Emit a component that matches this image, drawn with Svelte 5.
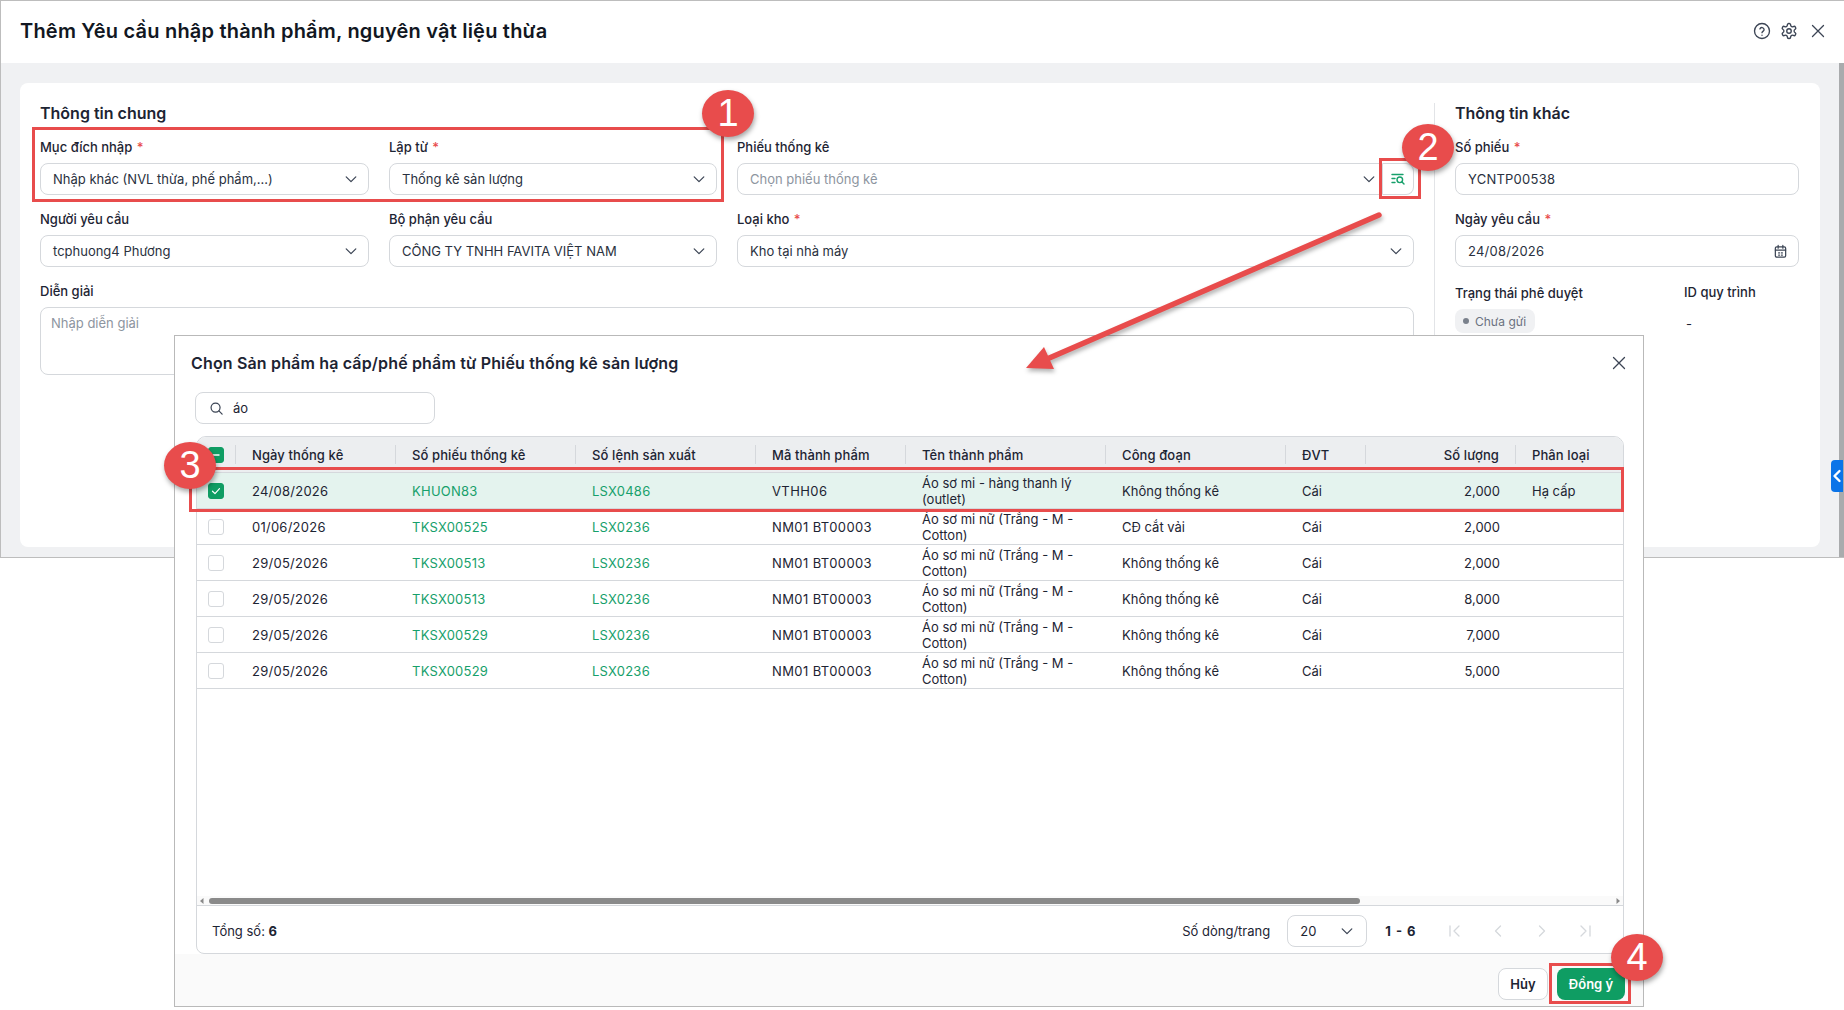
<script>
  const columns = [
    { label: 'Ngày thống kê' },
    { label: 'Số phiếu thống kê' },
    { label: 'Số lệnh sản xuất' },
    { label: 'Mã thành phẩm' },
    { label: 'Tên thành phẩm' },
    { label: 'Công đoạn' },
    { label: 'ĐVT' },
    { label: 'Số lượng', right: true },
    { label: 'Phân loại' }
  ];
  const shirt = 'Áo sơ mi nữ (Trắng - M - Cotton)';
  const rows = [
    { sel: true, d: '24/08/2026', p: 'KHUON83', l: 'LSX0486', m: 'VTHH06', t: 'Áo sơ mi - hàng thanh lý (outlet)', c: 'Không thống kê', q: '2,000', k: 'Hạ cấp' },
    { d: '01/06/2026', p: 'TKSX00525', l: 'LSX0236', m: 'NM01 BT00003', t: shirt, c: 'CĐ cắt vải', q: '2,000', k: '' },
    { d: '29/05/2026', p: 'TKSX00513', l: 'LSX0236', m: 'NM01 BT00003', t: shirt, c: 'Không thống kê', q: '2,000', k: '' },
    { d: '29/05/2026', p: 'TKSX00513', l: 'LSX0236', m: 'NM01 BT00003', t: shirt, c: 'Không thống kê', q: '8,000', k: '' },
    { d: '29/05/2026', p: 'TKSX00529', l: 'LSX0236', m: 'NM01 BT00003', t: shirt, c: 'Không thống kê', q: '7,000', k: '' },
    { d: '29/05/2026', p: 'TKSX00529', l: 'LSX0236', m: 'NM01 BT00003', t: shirt, c: 'Không thống kê', q: '5,000', k: '' }
  ];
</script>

{#snippet chevron()}
  <svg class="chev" viewBox="0 0 16 16" fill="none" stroke="#3b4454" stroke-width="1.4" stroke-linecap="round" stroke-linejoin="round"><path d="M2.5 5.500 8 11l5.500-5.500"/></svg>
{/snippet}
{#snippet closeX(size)}
  <svg width={size} height={size} viewBox="0 0 16 16" fill="none" stroke="#3b4454" stroke-width="1.3" stroke-linecap="round"><path d="M2.500 2.500l11 11M13.500 2.500l-11 11"/></svg>
{/snippet}

<div class="screen">
  <div class="window">
    <header class="top">
      <h1>Thêm Yêu cầu nhập thành phẩm, nguyên vật liệu thừa</h1>
      <div class="top-icons">
        <svg width="18" height="18" viewBox="0 0 24 24" fill="none" stroke="#3b4454" stroke-width="1.8" stroke-linecap="round"><circle cx="12" cy="12" r="10"/><path d="M9.2 9.2a2.9 2.9 0 0 1 5.6 1c0 1.900-2.800 2.600-2.800 4"/><path d="M12 17.600h.01"/></svg>
        <svg width="18" height="18" viewBox="0 0 24 24" fill="none" stroke="#3b4454" stroke-width="1.8"><path d="M12.22 2h-.44a2 2 0 0 0-2 2v.18a2 2 0 0 1-1 1.73l-.43.25a2 2 0 0 1-2 0l-.15-.08a2 2 0 0 0-2.73.73l-.22.38a2 2 0 0 0 .73 2.73l.15.1a2 2 0 0 1 1 1.72v.51a2 2 0 0 1-1 1.74l-.15.09a2 2 0 0 0-.73 2.73l.22.38a2 2 0 0 0 2.73.73l.15-.08a2 2 0 0 1 2 0l.43.25a2 2 0 0 1 1 1.73V20a2 2 0 0 0 2 2h.44a2 2 0 0 0 2-2v-.18a2 2 0 0 1 1-1.73l.43-.25a2 2 0 0 1 2 0l.15.08a2 2 0 0 0 2.73-.73l.22-.39a2 2 0 0 0-.73-2.73l-.15-.08a2 2 0 0 1-1-1.74v-.5a2 2 0 0 1 1-1.74l.15-.09a2 2 0 0 0 .73-2.73l-.22-.38a2 2 0 0 0-2.73-.73l-.15.08a2 2 0 0 1-2 0l-.43-.25a2 2 0 0 1-1-1.73V4a2 2 0 0 0-2-2z"/><circle cx="12" cy="12" r="3"/></svg>
        {@render closeX(16)}
      </div>
    </header>
    <main class="body">
      <section class="card">
        <div class="general">
          <h2>Thông tin chung</h2>
          <div class="grid">
            <div class="group"><span class="lbl">Mục đích nhập <i>*</i></span><div class="field"><span>Nhập khác (NVL thừa, phế phẩm,...)</span>{@render chevron()}</div></div>
            <div class="group"><span class="lbl">Lập từ <i>*</i></span><div class="field"><span>Thống kê sản lượng</span>{@render chevron()}</div></div>
            <div class="group"><span class="lbl">Phiếu thống kê</span>
              <div class="joined">
                <div class="field left"><span class="ph">Chọn phiếu thống kê</span>{@render chevron()}</div>
                <div class="lookup">
                  <svg width="16" height="16" viewBox="0 0 16 16" fill="none" stroke="#17a06b" stroke-width="1.4" stroke-linecap="round"><path d="M2 3.500h11M2 7.500h3M2 11.500h3"/><circle cx="9.800" cy="8.800" r="2.800"/><path d="M12 11l2 2"/></svg>
                </div>
              </div>
            </div>
            <div class="group"><span class="lbl">Người yêu cầu</span><div class="field"><span>tcphuong4 Phương</span>{@render chevron()}</div></div>
            <div class="group"><span class="lbl">Bộ phận yêu cầu</span><div class="field"><span>CÔNG TY TNHH FAVITA VIỆT NAM</span>{@render chevron()}</div></div>
            <div class="group"><span class="lbl">Loại kho <i>*</i></span><div class="field"><span>Kho tại nhà máy</span>{@render chevron()}</div></div>
            <div class="group wide"><span class="lbl">Diễn giải</span><div class="area">Nhập diễn giải</div></div>
          </div>
        </div>
        <aside class="other">
          <h2>Thông tin khác</h2>
          <div class="group"><span class="lbl">Số phiếu <i>*</i></span><div class="field"><span class="code">YCNTP00538</span></div></div>
          <div class="group"><span class="lbl">Ngày yêu cầu <i>*</i></span>
            <div class="field"><span class="code">24/08/2026</span>
              <svg width="15" height="15" viewBox="0 0 16 16" fill="none" stroke="#3b4454" stroke-width="1.3" stroke-linecap="round"><rect x="2.500" y="3" width="11" height="11" rx="1.500"/><path d="M5.500 1.500v3M10.500 1.500v3M2.500 6.500h11M6 9.500h1M9 9.500h1M6 11.800h1M9 11.800h1"/></svg>
            </div>
          </div>
          <div class="status">
            <div class="st-col"><span class="lbl st-l">Trạng thái phê duyệt</span><span class="chip"><b></b>Chưa gửi</span></div>
            <div class="id-col"><span class="lbl">ID quy trình</span><span class="dash">-</span></div>
          </div>
        </aside>
      </section>
    </main>
    <div class="scroll"></div>
    <div class="tab"><svg width="10" height="14" viewBox="0 0 10 14" fill="none" stroke="#fff" stroke-width="2.400" stroke-linecap="round" stroke-linejoin="round"><path d="M7.500 2 2.500 7l5 5"/></svg></div>
  </div>

  <div class="dialog">
    <div class="d-head">
      <h3>Chọn Sản phẩm hạ cấp/phế phẩm từ Phiếu thống kê sản lượng</h3>
      {@render closeX(16)}
    </div>
    <div class="search">
      <svg width="15" height="15" viewBox="0 0 16 16" fill="none" stroke="#3b4454" stroke-width="1.3" stroke-linecap="round"><circle cx="7" cy="7" r="4.800"/><path d="M10.600 10.600 14 14"/></svg>
      <span>áo</span>
    </div>
    <div class="table">
      <div class="tr th">
        <div class="cell chk"><span class="box on"><svg width="10" height="10" viewBox="0 0 10 10" stroke="#fff" stroke-width="1.400" stroke-linecap="round"><path d="M2 5h6"/></svg></span></div>
        {#each columns as c}
          <div class="cell sep" class:num={c.right}>{c.label}</div>
        {/each}
      </div>
      {#each rows as r}
        <div class="tr" class:selected={r.sel}>
          <div class="cell chk">
            {#if r.sel}
              <span class="box on"><svg width="12" height="12" viewBox="0 0 12 12" fill="none" stroke="#fff" stroke-width="1.200" stroke-linecap="round" stroke-linejoin="round"><path d="M2.500 6.200 5 8.600l4.500-5"/></svg></span>
            {:else}
              <span class="box"></span>
            {/if}
          </div>
          <div class="cell code">{r.d}</div>
          <div class="cell link code">{r.p}</div>
          <div class="cell link code">{r.l}</div>
          <div class="cell mat">{r.m}</div>
          <div class="cell two">{r.t}</div>
          <div class="cell">{r.c}</div>
          <div class="cell">Cái</div>
          <div class="cell num">{r.q}</div>
          <div class="cell">{r.k}</div>
        </div>
      {/each}
      <div class="spacer"></div>
      <div class="hbar">
        <svg class="arr" viewBox="0 0 6 8" fill="#8a8a8a"><path d="M4.500 1v6L1 4z"/></svg>
        <div class="thumb"></div>
        <svg class="arr" viewBox="0 0 6 8" fill="#8a8a8a"><path d="M1.500 1v6L5 4z"/></svg>
      </div>
      <div class="pager">
        <span class="total">Tổng số: <b>6</b></span>
        <span class="per">Số dòng/trang</span>
        <div class="size"><span>20</span>{@render chevron()}</div>
        <b class="range">1 - 6</b>
        <div class="nav">
          <svg viewBox="0 0 16 16"><path d="M3 3v10M12 3 7 8l5 5"/></svg>
          <svg viewBox="0 0 16 16"><path d="M10.500 3 5.500 8l5 5"/></svg>
          <svg viewBox="0 0 16 16"><path d="M5.500 3l5 5-5 5"/></svg>
          <svg viewBox="0 0 16 16"><path d="M13 3v10M4 3l5 5-5 5"/></svg>
        </div>
      </div>
    </div>
    <div class="d-foot">
      <button class="ghost">Hủy</button>
      <button class="primary">Đồng ý</button>
    </div>
  </div>

  <div class="mark m1"></div>
  <div class="mark m2"></div>
  <div class="mark m3"></div>
  <div class="mark m4"></div>
  <svg class="arrow" width="400" height="190" viewBox="0 0 400 190">
    <path d="M376 5 44 149" fill="none" stroke="#e84c4c" stroke-width="5.500" stroke-linecap="round"/>
    <path d="M23 158 41 137 51 159z" fill="#e84c4c"/>
  </svg>
  <div class="badge b1">1</div>
  <div class="badge b2">2</div>
  <div class="badge b3">3</div>
  <div class="badge b4">4</div>
</div>

<style>
  :global(body) { margin: 0; background: #fff; overflow: hidden; }
  .screen { position: relative; width: 1844px; height: 1010px; background: #fff; overflow: hidden; font-family: Inter, "Noto Sans", sans-serif; font-size: 13px; color: #1d2433; }
  h1, h2, h3 { margin: 0; }

  .window { position: relative; height: 558px; box-sizing: border-box; border: 1px solid #bdbdbd; border-width: 1px 0 1px 1px; display: flex; flex-direction: column; overflow: hidden; }
  .top { height: 62px; box-sizing: border-box; padding: 0 18px 2px 19px; flex: none; display: flex; align-items: center; justify-content: space-between; background: #fff; }
  h1 { font-size: 20px; font-weight: 600; letter-spacing: .2px; color: #111722; }
  .top-icons { display: flex; align-items: center; gap: 9px; }
  .top-icons svg:last-child { margin-left: 3px; }
  .body { flex: 1; background: #f0f1f3; padding: 20px 24px 10px 19px; display: flex; }
  .card { flex: 1; background: #fff; border-radius: 8px; display: flex; padding: 20px 21px 0 20px; }
  h2 { font-size: 16px; font-weight: 600; line-height: 20px; margin-bottom: 16px; color: #1d2433; }
  .general { width: 1374px; flex: none; }
  .grid { display: grid; grid-template-columns: 329px 328px 677px; column-gap: 20px; row-gap: 16px; }
  .wide { grid-column: 1 / -1; }
  .group { display: flex; flex-direction: column; gap: 8px; }
  .lbl { font-weight: 500; font-size: 13px; line-height: 16px; color: #1d2433; }
  .lbl i { color: #e84c4c; font-style: normal; margin-left: 1px; }
  .field { height: 32px; box-sizing: border-box; border: 1px solid #d5d8dc; border-radius: 8px; display: flex; align-items: center; justify-content: space-between; padding: 0 10px 0 12px; background: #fff; color: #2a3140; }
  .chev { width: 14px; height: 14px; flex: none; }
  .ph { color: #8d95a0; }
  .joined { display: flex; }
  .left { flex: 1; border-radius: 8px 0 0 8px; padding-right: 6px; }
  .lookup { width: 31px; height: 32px; box-sizing: border-box; border: 1px solid #d5d8dc; border-left: 0; border-radius: 0 8px 8px 0; display: flex; align-items: center; justify-content: center; }
  .area { height: 68px; box-sizing: border-box; border: 1px solid #d5d8dc; border-radius: 8px; padding: 7px 10px; color: #8d95a0; line-height: 16px; }
  .other { flex: 1; border-left: 1px solid #e2e4e7; margin-left: 20px; padding-left: 20px; display: flex; flex-direction: column; }
  .other .group { margin-bottom: 16px; }
  .code { letter-spacing: .25px; }
  .mat { letter-spacing: .4px; }
  .status { display: flex; margin-top: 1px; }
  .st-col { width: 229px; display: flex; flex-direction: column; align-items: flex-start; }
  .st-l { margin-top: 1px; }
  .id-col { display: flex; flex-direction: column; }
  .chip { margin-top: 8px; height: 24px; width: 80px; box-sizing: border-box; border-radius: 8px; background: #f0f1f3; color: #6b7280; font-size: 12px; display: flex; align-items: center; gap: 6px; padding-left: 8px; }
  .chip b { width: 6px; height: 6px; border-radius: 50%; background: #7a818c; }
  .dash { margin-top: 16px; margin-left: 2px; }
  .scroll { position: absolute; right: 0; top: 62px; bottom: 0; width: 5px; background: #a9abad; }
  .tab { position: absolute; right: 1px; top: 459px; width: 12px; height: 32px; background: #0b74e8; border-radius: 4px 0 0 4px; display: flex; align-items: center; justify-content: center; }

  .dialog { position: absolute; left: 174px; top: 335px; width: 1470px; height: 672px; box-sizing: border-box; border: 1px solid #b9b9b9; background: #fff; display: flex; flex-direction: column; }
  .d-head { height: 54px; flex: none; display: flex; align-items: center; justify-content: space-between; padding: 0 16px 0 16px; }
  h3 { font-size: 16px; font-weight: 600; letter-spacing: .16px; color: #1d2433; }
  .search { margin: 2px 0 0 20px; width: 240px; height: 32px; box-sizing: border-box; flex: none; border: 1px solid #d5d8dc; border-radius: 8px; display: flex; align-items: center; gap: 9px; padding-left: 13px; }
  .table { margin: 12px 19px 0 21px; flex: 1; min-height: 0; border: 1px solid #d5d8dc; border-radius: 10px 10px 8px 8px; display: flex; flex-direction: column; overflow: hidden; }
  .tr { display: grid; grid-template-columns: 39px 160px 180px 180px 150px 200px 180px 80px 150px 1fr; height: 36px; box-sizing: border-box; border-bottom: 1px solid #d5d8dc; flex: none; }
  .th { background: #eceef0; font-weight: 500; letter-spacing: .1px; height: 36px; }
  .selected { background: #e4f3ee; }
  .cell { display: flex; align-items: center; padding: 0 16px; line-height: 16px; min-width: 0; position: relative; }
  .chk { padding: 0 0 0 11px; }
  .sep::before { content: ""; position: absolute; left: -1px; top: 8px; bottom: 8px; width: 1px; background: #d5d8dc; }
  .num { justify-content: flex-end; }
  .th .num { padding-right: 17px; }
  .link { color: #17a06b; }
  .two { padding-right: 12px; }
  .box { width: 16px; height: 16px; box-sizing: border-box; border: 1px solid #d5d8dc; border-radius: 3px; background: #fff; display: flex; align-items: center; justify-content: center; }
  .box.on { background: #0f9d63; border-color: #0f9d63; }
  .spacer { flex: 1; }
  .hbar { height: 9px; flex: none; display: flex; align-items: center; background: #fafafa; padding: 0 2px; border-bottom: 1px solid #d5d8dc; gap: 4px; }
  .arr { width: 6px; height: 8px; flex: none; }
  .thumb { width: 1151px; height: 6px; background: #8a8a8a; border-radius: 3px; margin-right: auto; }
  .pager { height: 47px; box-sizing: border-box; padding: 3px 0 0 15px; flex: none; display: flex; align-items: center; }
  .total { margin-right: auto; }
  .pager b { font-weight: 700; }
  .per { margin-right: 17px; }
  .size { width: 80px; height: 32px; box-sizing: border-box; border: 1px solid #d5d8dc; border-radius: 8px; display: flex; align-items: center; justify-content: space-between; padding: 0 12px; }
  .range { margin-left: 18px; margin-right: 31px; word-spacing: 2px; }
  .nav { display: flex; gap: 27.5px; margin-right: 30px; }
  .nav svg { width: 16px; height: 16px; fill: none; stroke: #d5d8dc; stroke-width: 1.3; stroke-linecap: round; stroke-linejoin: round; }
  .d-foot { height: 52px; box-sizing: border-box; padding: 14px 18px 0 0; flex: none; background: #fafafa; display: flex; align-items: flex-start; justify-content: flex-end; gap: 9px; }
  button { height: 32px; border-radius: 8px; font: 600 13px Inter, sans-serif; box-sizing: border-box; }
  .ghost { width: 50px; background: #fff; border: 1px solid #d5d8dc; color: #1d2433; }
  .primary { width: 68px; background: #0f9d63; border: 0; color: #fff; }

  .mark { position: absolute; box-sizing: border-box; border: 3px solid #e84c4c; pointer-events: none; }
  .m1 { left: 32px; top: 127px; width: 692px; height: 75px; }
  .m2 { left: 1379px; top: 158px; width: 42px; height: 41px; }
  .m3 { left: 189px; top: 467px; width: 1435px; height: 45px; }
  .m4 { left: 1549px; top: 963px; width: 82px; height: 41px; }
  .arrow { position: absolute; left: 1003px; top: 210px; filter: drop-shadow(1px 3px 2px rgba(0,0,0,.3)); }
  .badge { position: absolute; width: 52px; height: 47px; border-radius: 50%; background: #e84c4c; color: #fff; font-size: 38px; line-height: 47px; text-align: center; font-family: "Liberation Sans", sans-serif; box-shadow: 1px 3px 5px rgba(0,0,0,.35); }
  .b1 { left: 702px; top: 90px; }
  .b2 { left: 1402px; top: 124px; }
  .b3 { left: 164px; top: 442px; }
  .b4 { left: 1611px; top: 934px; }
</style>
